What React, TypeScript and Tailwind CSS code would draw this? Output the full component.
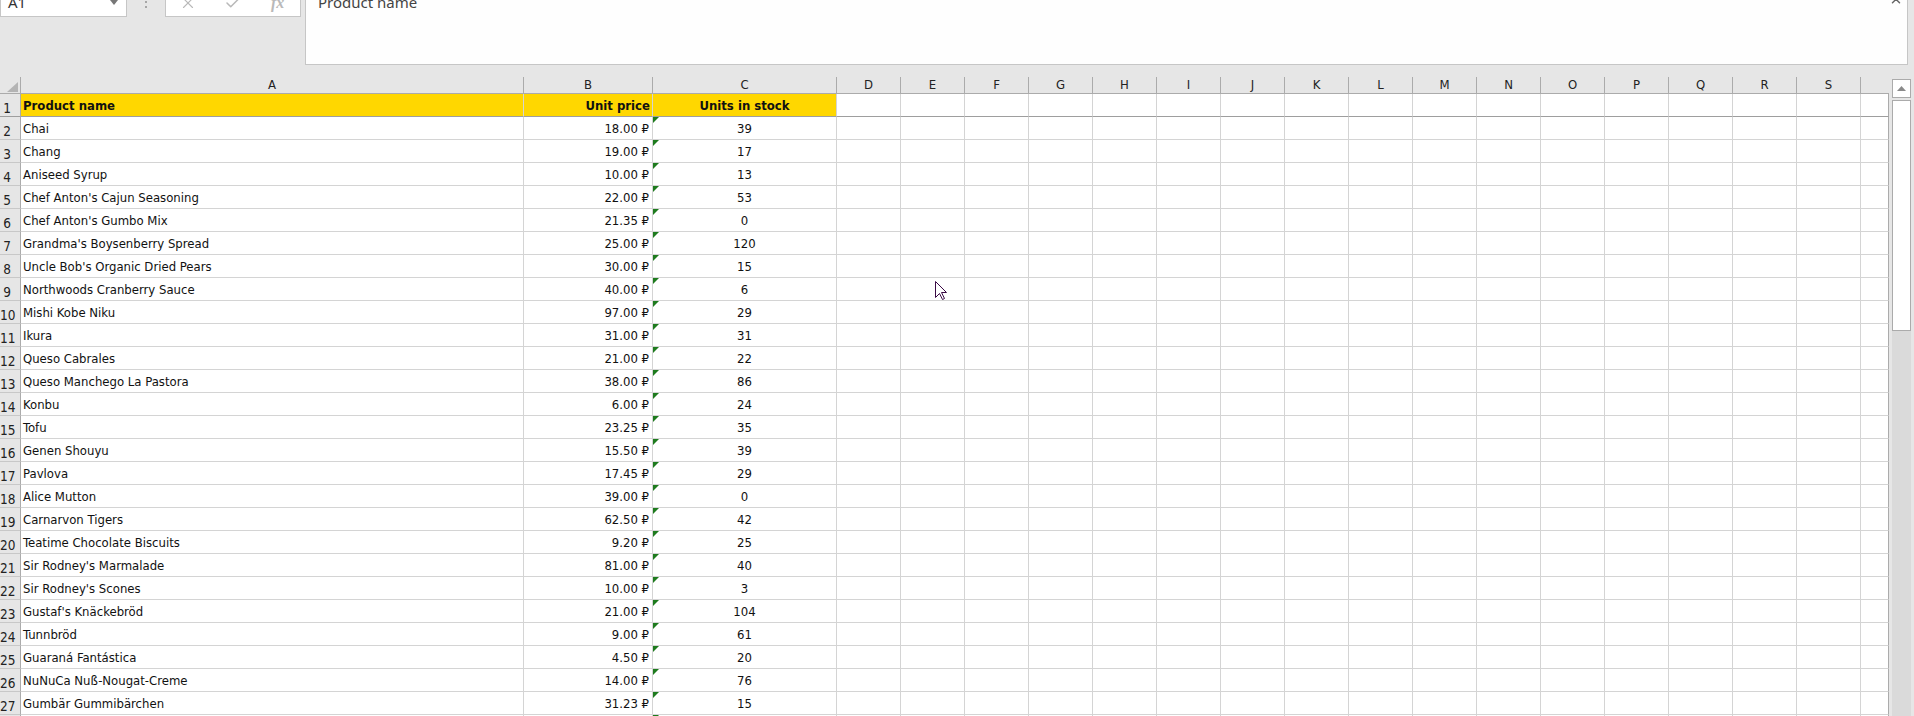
import { X, Check, ChevronUp } from 'lucide-react';

type Product = { name: string; price: string; stock: string };

const products: Product[] = [
  { name: 'Chai', price: '18.00', stock: '39' },
  { name: 'Chang', price: '19.00', stock: '17' },
  { name: 'Aniseed Syrup', price: '10.00', stock: '13' },
  { name: "Chef Anton's Cajun Seasoning", price: '22.00', stock: '53' },
  { name: "Chef Anton's Gumbo Mix", price: '21.35', stock: '0' },
  { name: "Grandma's Boysenberry Spread", price: '25.00', stock: '120' },
  { name: "Uncle Bob's Organic Dried Pears", price: '30.00', stock: '15' },
  { name: 'Northwoods Cranberry Sauce', price: '40.00', stock: '6' },
  { name: 'Mishi Kobe Niku', price: '97.00', stock: '29' },
  { name: 'Ikura', price: '31.00', stock: '31' },
  { name: 'Queso Cabrales', price: '21.00', stock: '22' },
  { name: 'Queso Manchego La Pastora', price: '38.00', stock: '86' },
  { name: 'Konbu', price: '6.00', stock: '24' },
  { name: 'Tofu', price: '23.25', stock: '35' },
  { name: 'Genen Shouyu', price: '15.50', stock: '39' },
  { name: 'Pavlova', price: '17.45', stock: '29' },
  { name: 'Alice Mutton', price: '39.00', stock: '0' },
  { name: 'Carnarvon Tigers', price: '62.50', stock: '42' },
  { name: 'Teatime Chocolate Biscuits', price: '9.20', stock: '25' },
  { name: "Sir Rodney's Marmalade", price: '81.00', stock: '40' },
  { name: "Sir Rodney's Scones", price: '10.00', stock: '3' },
  { name: "Gustaf's Knäckebröd", price: '21.00', stock: '104' },
  { name: 'Tunnbröd', price: '9.00', stock: '61' },
  { name: 'Guaraná Fantástica', price: '4.50', stock: '20' },
  { name: 'NuNuCa Nuß-Nougat-Creme', price: '14.00', stock: '76' },
  { name: 'Gumbär Gummibärchen', price: '31.23', stock: '15' },
  { name: '', price: '', stock: '' },
];

const extraCols = ['D', 'E', 'F', 'G', 'H', 'I', 'J', 'K', 'L', 'M', 'N', 'O', 'P', 'Q', 'R', 'S'];

function ErrorMark() {
  return (
    <svg className="absolute left-0 top-0" width="6" height="6" viewBox="0 0 6 6">
      <polygon points="0,0 6,0 0,6" fill="#1e7b1e" />
    </svg>
  );
}

function RowNumber({ n, dark }: { n: number; dark?: boolean }) {
  return (
    <div
      className={`flex h-[23px] w-[21px] shrink-0 items-end border-r border-b border-r-[#ababab] bg-[#e6e6e6] font-normal ${
        dark ? 'border-b-[#9e9e9e]' : 'border-b-[#c8c8c8]'
      }`}
    >
      <span className="w-[14px] text-center text-[13.5px] leading-[15px] text-[#222]">{n}</span>
    </div>
  );
}

function FillerCells({ dark }: { dark?: boolean }) {
  const b = dark ? 'border-b-[#9e9e9e]' : 'border-b-[#d4d4d4]';
  return (
    <>
      {extraCols.map((c) => (
        <div key={c} className={`h-[23px] w-[64px] shrink-0 border-r border-b border-r-[#d4d4d4] bg-white ${b}`} />
      ))}
      <div className={`h-[23px] w-[28px] shrink-0 border-r border-b border-r-[#ababab] bg-white ${b}`} />
    </>
  );
}

function MouseCursor() {
  return (
    <svg className="absolute left-[935px] top-[281px]" width="13" height="20" viewBox="0 0 13 20">
      <path
        d="M0.5 0.5 V16.5 L4.5 12.5 L7.5 18.5 L9.5 17.5 L6.5 11.5 H11.5 Z"
        fill="#ffffff"
        stroke="#3a0b45"
        strokeWidth="1"
      />
    </svg>
  );
}

export default function App() {
  return (
    <div className="relative h-[716px] w-[1914px] overflow-hidden bg-[#e6e6e6] [font-family:'DejaVu_Sans_Condensed','Liberation_Sans',sans-serif]">
      {/* formula bar, cut at the top */}
      <div className="h-[77px] overflow-hidden">
        <div className="-mt-[12px] flex items-start [font-family:'Segoe_UI','Noto_Sans',sans-serif]">
          <div className="relative h-[29px] w-[127px] shrink-0 border border-[#c6c6c6] bg-white pl-[7px] pt-[3px] text-[15px] leading-[20px] text-[#333]">
            A1
            <svg className="absolute right-[8px] top-[11px]" width="8" height="5" viewBox="0 0 8 5">
              <polygon points="0,0 8,0 4,5" fill="#777" />
            </svg>
          </div>
          <div className="flex w-[38px] shrink-0 flex-col items-center gap-[3px] pt-[8px]">
            <span className="h-[2px] w-[2px] bg-[#a6a6a6]" />
            <span className="h-[2px] w-[2px] bg-[#a6a6a6]" />
            <span className="h-[2px] w-[2px] bg-[#a6a6a6]" />
          </div>
          <div className="flex h-[29px] w-[136px] shrink-0 items-center border border-[#c6c6c6] bg-white text-[#b9b9b9]">
            <div className="flex w-[45px] justify-center">
              <X size={18} strokeWidth={1.5} />
            </div>
            <div className="flex w-[45px] justify-center">
              <Check size={18} strokeWidth={2} />
            </div>
            <div className="flex w-[45px] justify-center text-[16px] font-bold italic [font-family:'Liberation_Serif',serif]">
              fx
            </div>
          </div>
          <div className="relative ml-[4px] h-[77px] w-[1603px] shrink-0 border border-[#c6c6c6] bg-[#fefefe] pl-[12px] pt-[3px] text-[15px] leading-[20px] text-[#444]">
            Product name
            <ChevronUp className="absolute right-[4px] top-[5px] text-[#666]" size={14} strokeWidth={2.5} />
          </div>
        </div>
      </div>

      <div className="flex h-[639px] items-start">
        {/* sheet grid */}
        <div className="flex w-[1889px] shrink-0 flex-col">
          <div className="flex h-[17px] border-b border-[#ababab] text-[13px] leading-[16px] text-[#222]">
            <div className="relative h-[16px] w-[21px] shrink-0 border-r border-[#ababab]">
              <svg className="absolute left-[7px] top-[5px]" width="11" height="10" viewBox="0 0 11 10">
                <polygon points="11,0 11,10 0,10" fill="#b4b4b4" />
              </svg>
            </div>
            <div className="w-[503px] shrink-0 border-r border-[#ababab] text-center">A</div>
            <div className="w-[129px] shrink-0 border-r border-[#ababab] text-center">B</div>
            <div className="w-[184px] shrink-0 border-r border-[#ababab] text-center">C</div>
            {extraCols.map((c) => (
              <div key={c} className="w-[64px] shrink-0 border-r border-[#ababab] text-center">
                {c}
              </div>
            ))}
            <div className="w-[28px] shrink-0" />
          </div>

          {/* row 1, frozen header */}
          <div className="flex text-[13px] leading-[22px] text-[#111]">
            <RowNumber n={1} dark />
            <div className="h-[23px] w-[503px] shrink-0 border-r border-b border-r-[#d4d4d4] border-b-[#9e9e9e] bg-[#ffd700] pl-[2px] pt-[1px] font-bold">
              Product name
            </div>
            <div className="h-[23px] w-[129px] shrink-0 border-r border-b border-r-[#d4d4d4] border-b-[#9e9e9e] bg-[#ffd700] pr-[2px] pt-[1px] text-right font-bold">
              Unit price
            </div>
            <div className="h-[23px] w-[184px] shrink-0 border-r border-b border-r-[#d4d4d4] border-b-[#9e9e9e] bg-[#ffd700] pt-[1px] text-center font-bold">
              Units in stock
            </div>
            <FillerCells dark />
          </div>

          {products.map((p, i) => (
            <div key={i} className="flex text-[13px] leading-[22px] text-[#111]">
              <RowNumber n={i + 2} />
              <div className="h-[23px] w-[503px] shrink-0 border-r border-b border-[#d4d4d4] bg-white pl-[2px] pt-[1px]">
                {p.name}
              </div>
              <div className="h-[23px] w-[129px] shrink-0 border-r border-b border-[#d4d4d4] bg-white pr-[3px] pt-[1px] text-right">
                {p.price && `${p.price} ₽`}
              </div>
              <div className="relative h-[23px] w-[184px] shrink-0 border-r border-b border-[#d4d4d4] bg-white pt-[1px] text-center">
                <ErrorMark />
                {p.stock}
              </div>
              <FillerCells />
            </div>
          ))}
        </div>

        {/* vertical scrollbar */}
        <div className="ml-[3px] flex h-[639px] w-[19px] shrink-0 flex-col pt-[2px]">
          <div className="flex h-[19px] items-center justify-center border border-[#ababab] bg-white">
            <svg width="9" height="5" viewBox="0 0 9 5">
              <polygon points="0,5 9,5 4.5,0" fill="#8a8a8a" />
            </svg>
          </div>
          <div className="mt-[2px] h-[231px] border border-[#ababab] bg-white" />
          <div className="flex-1 bg-[#dadada]" />
        </div>
      </div>

      <MouseCursor />
    </div>
  );
}
